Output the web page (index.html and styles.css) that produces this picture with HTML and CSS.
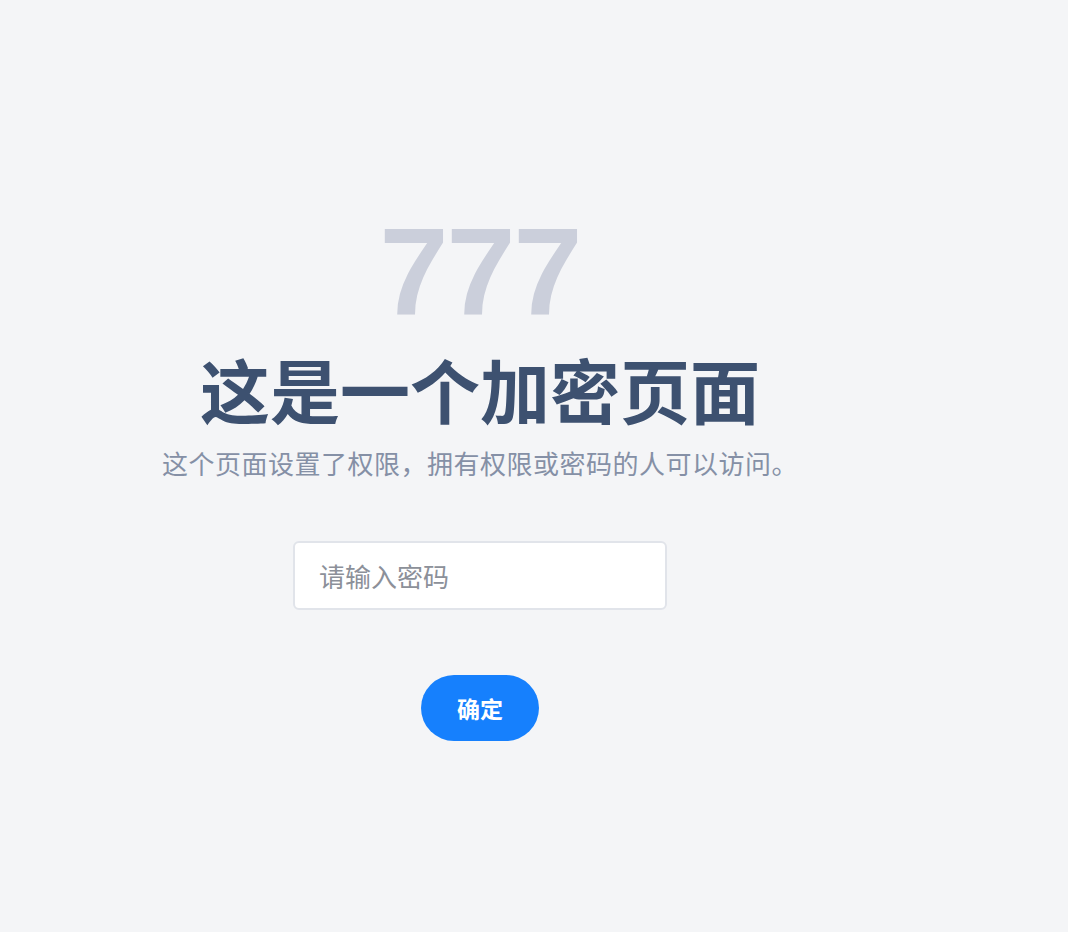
FILE: index.html
```html
<!DOCTYPE html>
<html lang="zh-CN">
<head>
<meta charset="utf-8">
<title>加密页面</title>
<link rel="stylesheet" href="styles.css">
</head>
<body>
<main class="page">
  <div class="code">777</div>
  <h1 class="title">这是一个加密页面</h1>
  <p class="desc">这个页面设置了权限，拥有权限或密码的人可以访问。</p>
  <input class="pwd" type="password" placeholder="请输入密码">
  <button class="ok" type="button">确定</button>
</main>
</body>
</html>
```

FILE: styles.css
```css
html, body {
  margin: 0;
  padding: 0;
  background: #f4f5f7;
  height: 100%;
}
body {
  font-family: "Noto Sans CJK SC", "Noto Sans", sans-serif;
}
.page {
  width: 960px;
  display: flex;
  flex-direction: column;
  align-items: center;
  padding-top: 210px;
}
.code {
  font-family: "Liberation Sans", Arial, sans-serif;
  font-weight: 700;
  font-size: 124px;
  line-height: 124px;
  color: #cbcfdb;
  letter-spacing: -2px;
}
.title {
  margin: 19px 0 0;
  font-size: 70px;
  font-weight: 600;
  line-height: 72px;
  color: #3d5170;
}
.desc {
  margin: 22px 0 0;
  font-size: 26px;
  letter-spacing: 0.5px;
  line-height: 32px;
  color: #8590a6;
}
.pwd {
  box-sizing: border-box;
  margin-top: 62px;
  width: 374px;
  height: 69px;
  border: 2px solid #e1e4ea;
  border-radius: 6px;
  background: #fff;
  padding: 0 24px;
  font-family: inherit;
  font-size: 26px;
  color: #333;
  outline: none;
}
.pwd::placeholder {
  color: #8c9099;
}
.ok {
  margin-top: 65px;
  width: 118px;
  height: 66px;
  border: none;
  border-radius: 33px;
  background: #1680fd;
  color: #fff;
  font-family: inherit;
  font-size: 23px;
  font-weight: 600;
  cursor: pointer;
}
```
